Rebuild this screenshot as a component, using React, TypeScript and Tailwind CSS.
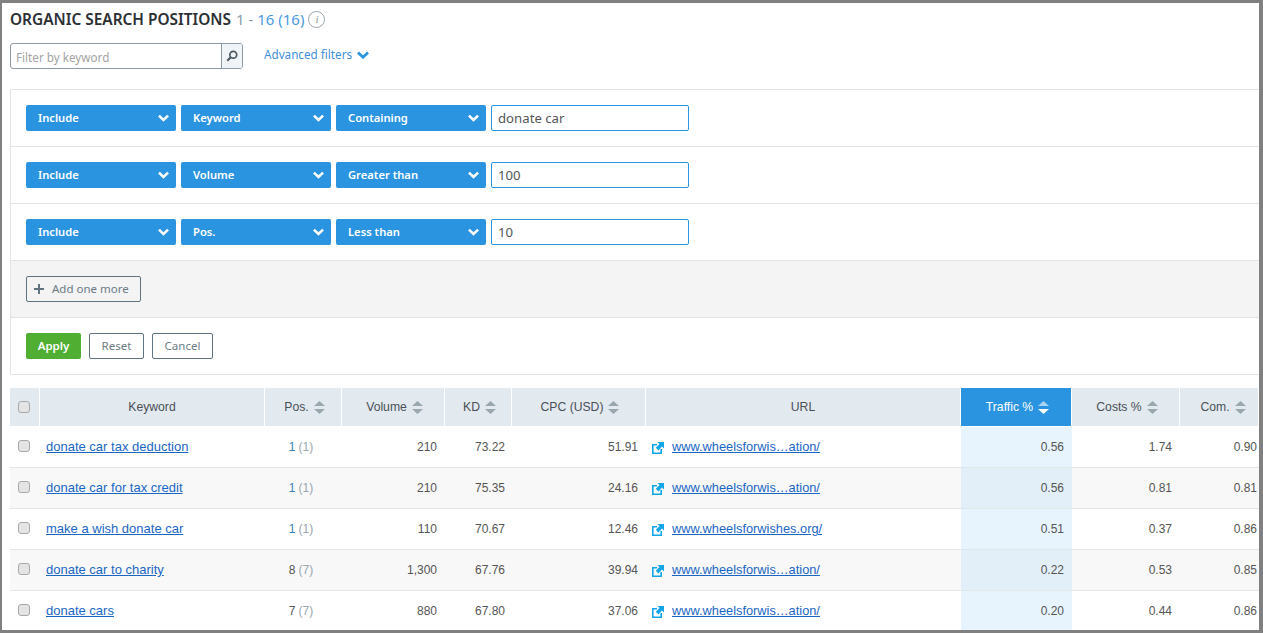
import React from "react";

const FILTERS = [
  { field: "Keyword", op: "Containing", value: "donate car" },
  { field: "Volume", op: "Greater than", value: "100" },
  { field: "Pos.", op: "Less than", value: "10" },
];

const ROWS = [
  { kw: "donate car tax deduction", pos: "1", prev: "(1)", vol: "210", kd: "73.22", cpc: "51.91", url: "www.wheelsforwis…ation/", traffic: "0.56", costs: "1.74", com: "0.90" },
  { kw: "donate car for tax credit", pos: "1", prev: "(1)", vol: "210", kd: "75.35", cpc: "24.16", url: "www.wheelsforwis…ation/", traffic: "0.56", costs: "0.81", com: "0.81" },
  { kw: "make a wish donate car", pos: "1", prev: "(1)", vol: "110", kd: "70.67", cpc: "12.46", url: "www.wheelsforwishes.org/", traffic: "0.51", costs: "0.37", com: "0.86" },
  { kw: "donate car to charity", pos: "8", prev: "(7)", vol: "1,300", kd: "67.76", cpc: "39.94", url: "www.wheelsforwis…ation/", traffic: "0.22", costs: "0.53", com: "0.85" },
  { kw: "donate cars", pos: "7", prev: "(7)", vol: "880", kd: "67.80", cpc: "37.06", url: "www.wheelsforwis…ation/", traffic: "0.20", costs: "0.44", com: "0.86" },
];

const UI_FONT = "font-['Noto_Sans',sans-serif]";

function Chevron({ className }: { className?: string }) {
  return (
    <svg viewBox="0 0 12 8" className={className} fill="none" stroke="currentColor" strokeWidth="2.8">
      <path d="M1 1.4 6 6.2l5-4.8" />
    </svg>
  );
}

function Select({ label, width }: { label: string; width: string }) {
  return (
    <div className={`${width} h-[26px] rounded-[2px] bg-[#2b94e1] text-white flex items-center justify-between pl-3 pr-[7px] text-[11.2px] font-semibold`}>
      <span>{label}</span>
      <Chevron className="w-[11px] h-[8px]" />
    </div>
  );
}

function SortIcon({ active }: { active?: boolean }) {
  return (
    <svg viewBox="0 0 11 13" className="w-[11px] h-[13px] ml-[5px]">
      <path d="M5.5 0 11 5H0z" fill={active ? "#a9d3f3" : "#9aa7ae"} />
      <path d="M0 8h11l-5.5 5z" fill={active ? "#ffffff" : "#9aa7ae"} />
    </svg>
  );
}

function Th({ label, width, sort, active, extra, children }: { label?: string; width: string; sort?: boolean; active?: boolean; extra?: string; children?: React.ReactNode }) {
  return (
    <div className={`${width} ${extra ?? ""} shrink-0 flex items-center justify-center mr-px ${active ? "bg-[#2b94e1] text-white" : "bg-[#e2eaf0] text-[#4a4f55]"}`}>
      {children}
      {label && <span>{label}</span>}
      {sort && <SortIcon active={active} />}
    </div>
  );
}

function Checkbox() {
  return <div className="w-[12px] h-[12px] rounded-[3px] border border-[#a9a9a9] bg-[#e4e4e4]" />;
}

function ExternalIcon() {
  return (
    <svg viewBox="0 0 12 12" className="w-[12px] h-[12px] shrink-0 mt-[1px]">
      <path d="M0 2h5v1.6H1.6v6.8h6.8V7H10v5H0z" fill="#12a5e8" />
      <path d="M5.5 0H12v6.5L10 4.6 6.4 8.4 3.8 5.8 7.5 2z" fill="#12a5e8" />
    </svg>
  );
}

export default function App() {
  return (
    <div className="w-[1263px] h-[633px] overflow-hidden bg-white border-[#808080] border-t-[3px] border-l-[2px] border-r-[4px] border-b-[3px]">
      <div className={`${UI_FONT} pl-2 text-[#333]`}>
        <div className="h-[30px] pt-[3px] flex items-center">
          <span className="text-[15.4px] font-semibold text-[#2b2f33]">ORGANIC SEARCH POSITIONS</span>
          <span className="ml-[5px] text-[15px]"><span className="text-[#8b9aa5]">1 - </span><span className="text-[#4a9ae0]">16 (16)</span></span>
          <span className="ml-[4px] w-[17px] h-[17px] rounded-full border border-[#9aa3a9] flex items-center justify-center text-[11px] italic text-[#8a949b] font-['Liberation_Serif',serif]">i</span>
        </div>

        <div className="flex items-start mt-[10px] h-[46px]">
          <div className="w-[233px] h-[26px] flex border border-[#8d9ba4] rounded-[3px] overflow-hidden">
            <div className="flex-1 pl-[5px] text-[11.7px] text-[#a3a3a3] leading-[26px]">Filter by keyword</div>
            <div className="w-[21px] border-l border-[#8d9ba4] bg-[#f1f4f6] flex items-center justify-center">
              <svg viewBox="0 0 14 14" className="w-[12px] h-[12px]" fill="none" stroke="#4d5a62">
                <circle cx="8.5" cy="5.5" r="4" strokeWidth="2" />
                <path d="M5.5 8.5 1.5 12.5" strokeWidth="2.4" />
              </svg>
            </div>
          </div>
          <div className="ml-[21px] h-[24px] flex items-center text-[11.7px] text-[#3f8fd8]">
            Advanced filters
            <Chevron className="w-[12px] h-[8px] ml-[5px] text-[#2b94e1]" />
          </div>
        </div>

        <div className="border border-r-0 border-[#e3e3e3] rounded-l-[2px]">
          {FILTERS.map((f) => (
            <div key={f.field} className="h-[57px] border-b border-[#e3e3e3] flex items-center gap-[5px] pl-[15px]">
              <Select label="Include" width="w-[150px]" />
              <Select label={f.field} width="w-[150px]" />
              <Select label={f.op} width="w-[150px]" />
              <div className="w-[198px] h-[26px] border border-[#2b94e1] rounded-[2px] pl-[6px] text-[13.2px] leading-[24px] text-[#555]">{f.value}</div>
            </div>
          ))}
          <div className="h-[57px] bg-[#f4f4f4] border-b border-[#e3e3e3] flex items-center pl-[15px]">
            <div className="w-[115px] h-[26px] border border-[#5f7480] rounded-[2px] flex items-center pl-[7px] text-[11.5px] text-[#6b7b85]">
              <svg viewBox="0 0 10 10" className="w-[10px] h-[10px] mr-[8px]" fill="none" stroke="#5f7480" strokeWidth="2">
                <path d="M5 0v10M0 5h10" />
              </svg>
              Add one more
            </div>
          </div>
          <div className="h-[56px] flex items-center gap-[8px] pl-[15px] text-[11.5px]">
            <div className="w-[55px] h-[26px] bg-[#50ae32] text-white font-semibold rounded-[2px] flex items-center justify-center">Apply</div>
            <div className="w-[55px] h-[26px] border border-[#5f7480] text-[#6b7b85] rounded-[2px] flex items-center justify-center">Reset</div>
            <div className="w-[61px] h-[26px] border border-[#5f7480] text-[#6b7b85] rounded-[2px] flex items-center justify-center">Cancel</div>
          </div>
        </div>
      </div>

      <div className="ml-2 mt-[13px] font-['Liberation_Sans',Arial,sans-serif] text-[12px] text-[#555]">
        <div className="flex h-[38px] text-[12.2px]">
          <Th width="w-[29px]" extra="pr-px"><Checkbox /></Th>
          <Th label="Keyword" width="w-[224px]" />
          <Th label="Pos." width="w-[76px]" sort extra="pl-[3px]" />
          <Th label="Volume" width="w-[102px]" sort extra="pl-[3px]" />
          <Th label="KD" width="w-[66px]" sort extra="pl-[3px]" />
          <Th label="CPC (USD)" width="w-[133px]" sort extra="pl-[3px]" />
          <Th label="URL" width="w-[314px]" />
          <Th label="Traffic %" width="w-[110px]" sort active extra="pl-[3px]" />
          <Th label="Costs %" width="w-[107px]" sort extra="pl-[3px]" />
          <Th label="Com." width="w-[78px]" sort extra="pl-[8px]" />
        </div>
        <div className="pt-px">
          {ROWS.map((r, i) => (
            <div key={r.kw} className={`flex h-[41px] border-b border-[#e1e6e9] ${i % 2 ? "bg-[#f8f8f8]" : "bg-white"}`}>
              <div className="w-[30px] shrink-0 flex items-center pl-[8px] pb-[2px]"><Checkbox /></div>
              <div className="w-[225px] shrink-0 flex items-center pl-[6px] text-[#1a66c4] underline text-[13px]">{r.kw}</div>
              <div className="w-[77px] shrink-0 flex items-center justify-center pr-[5px]">
                <span className={r.pos === "1" ? "text-[#3d7fb5]" : "text-[#555]"}>{r.pos}</span>
                <span className="ml-[3px] text-[#9aa7ae]">{r.prev}</span>
              </div>
              <div className="w-[103px] shrink-0 flex items-center justify-end pr-[8px]">{r.vol}</div>
              <div className="w-[67px] shrink-0 flex items-center justify-end pr-[7px]">{r.kd}</div>
              <div className="w-[134px] shrink-0 flex items-center justify-end pr-[8px]">{r.cpc}</div>
              <div className="w-[315px] shrink-0 flex items-center pl-[6px] gap-[8px]">
                <ExternalIcon />
                <span className="text-[#1a66c4] underline text-[12.8px]">{r.url}</span>
              </div>
              <div className={`w-[111px] shrink-0 flex items-center justify-end pr-[8px] ${i % 2 ? "bg-[#e3eff8]" : "bg-[#e7f4fd]"}`}>{r.traffic}</div>
              <div className="w-[108px] shrink-0 flex items-center justify-end pr-[8px]">{r.costs}</div>
              <div className="w-[79px] shrink-0 flex items-center justify-end pr-[2px]">{r.com}</div>
            </div>
          ))}
        </div>
      </div>
    </div>
  );
}
